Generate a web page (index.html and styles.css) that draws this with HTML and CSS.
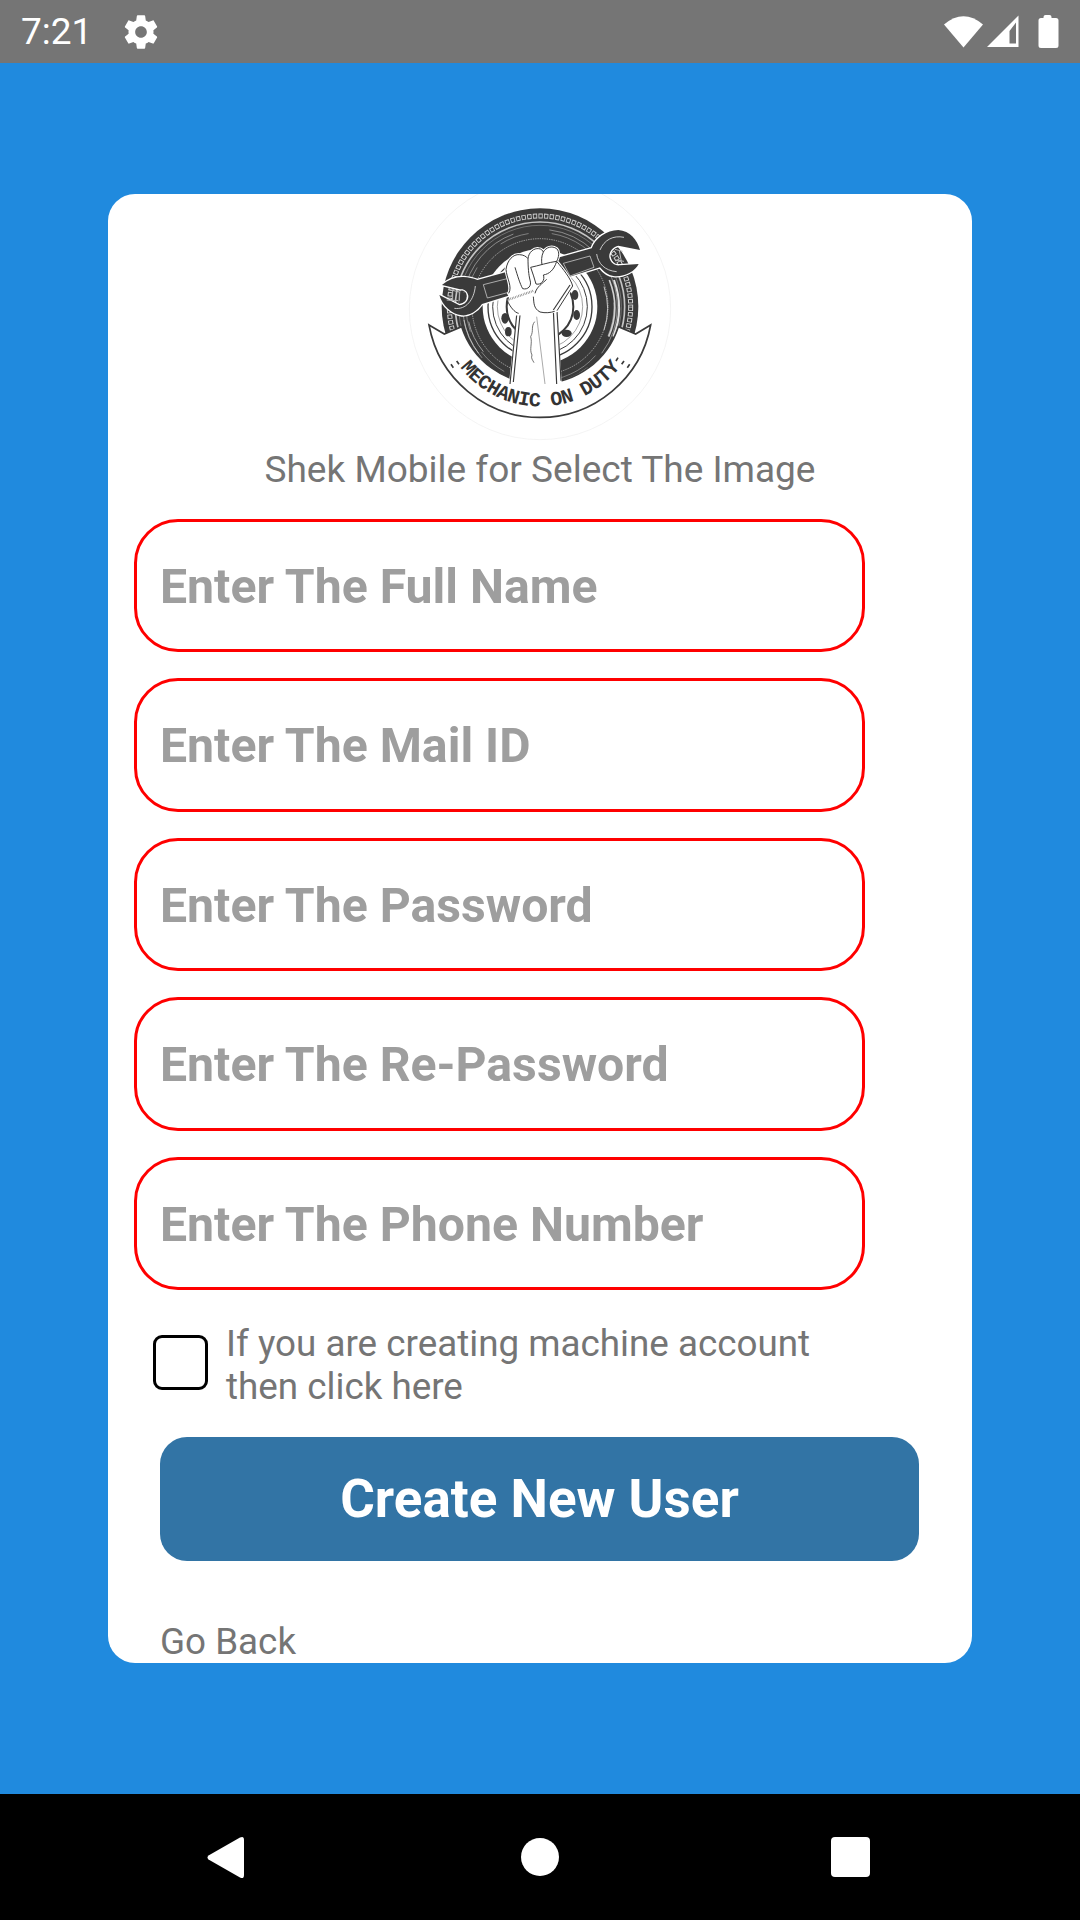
FILE: index.html
```html
<!DOCTYPE html>
<html lang="en">
<head>
<meta charset="utf-8">
<title>Create New User</title>
<link rel="stylesheet" href="styles.css">
</head>
<body>
<div class="screen">
  <header class="status">
    <div class="status-left">
      <span class="time">7:21</span>
      <svg class="gear" viewBox="0 0 24 24"><path d="M19.43 12.98c.04-.32.07-.64.07-.98s-.03-.66-.07-.98l2.11-1.65c.19-.15.24-.42.12-.64l-2-3.46c-.12-.22-.39-.3-.61-.22l-2.49 1c-.52-.4-1.08-.73-1.69-.98l-.38-2.65C14.46 2.18 14.25 2 14 2h-4c-.25 0-.46.18-.49.42l-.38 2.65c-.61.25-1.17.59-1.69.98l-2.49-1c-.23-.09-.49 0-.61.22l-2 3.46c-.13.22-.07.49.12.64l2.11 1.65c-.04.32-.07.65-.07.98s.03.66.07.98l-2.11 1.65c-.19.15-.24.42-.12.64l2 3.46c.12.22.39.3.61.22l2.49-1c.52.4 1.08.73 1.69.98l.38 2.65c.03.24.24.42.49.42h4c.25 0 .46-.18.49-.42l.38-2.65c.61-.25 1.17-.59 1.69-.98l2.49 1c.23.09.49 0 .61-.22l2-3.46c.12-.22.07-.49-.12-.64l-2.11-1.65zM12 15.5c-1.93 0-3.5-1.57-3.5-3.5s1.57-3.5 3.5-3.5 3.5 1.57 3.5 3.5-1.57 3.5-3.5 3.5z"/></svg>
    </div>
    <svg class="status-icons" width="116" height="36" viewBox="0 0 116 36">
      <path d="M0 10.5 Q19.5 -6 39 10.5 L19.5 33.5 Z"/>
      <path fill-rule="evenodd" d="M43 33 L74.5 1.5 V33 Z M65.5 29.5 H72 V8.5 L65.5 17 Z"/>
      <path d="M99.5 3 Q99.5 1 101.5 1 H105.5 Q107.5 1 107.5 3 V4 H112 Q114.500 4 114.500 6.500 V31.500 Q114.500 34 112 34 H97 Q94.500 34 94.500 31.500 V6.500 Q94.500 4 97 4 H99.500 Z"/>
    </svg>
  </header>

  <main class="main">
    <section class="card">
      <svg class="logo" viewBox="0 0 840 810">
        <circle cx="420" cy="387" r="392" fill="#fff" stroke="#eeeeee" stroke-width="2"/>
        <!-- tyre -->
        <circle cx="420" cy="380" r="295" fill="#3a3a3a"/>
        <circle cx="420" cy="380" r="272" fill="none" stroke="#d2d2d2" stroke-width="15" stroke-dasharray="13 4"/>
        <circle cx="420" cy="380" r="272" fill="none" stroke="#3a3a3a" stroke-width="9" stroke-dasharray="8 9" stroke-dashoffset="-2.500"/>
        <circle cx="420" cy="380" r="254" fill="none" stroke="#c4c4c4" stroke-width="5"/>
        <circle cx="420" cy="380" r="244" fill="none" stroke="#8e8e8e" stroke-width="2"/>
        <circle cx="420" cy="380" r="232" fill="none" stroke="#b5b5b5" stroke-width="2" stroke-dasharray="150 60 240 110"/>
        <circle cx="420" cy="380" r="222" fill="none" stroke="#a5a5a5" stroke-width="2" stroke-dasharray="90 70 200 100"/>
        <path d="M642 300 A236 236 0 0 1 640 470" fill="none" stroke="#e0e0e0" stroke-width="6"/>
        <path d="M628 300 A222 222 0 0 1 626 470" fill="none" stroke="#d0d0d0" stroke-width="5"/>
        <path d="M612 320 A204 204 0 0 1 612 450" fill="none" stroke="#c0c0c0" stroke-width="3"/>
        <path d="M192 420 A232 232 0 0 0 236 520" fill="none" stroke="#bdbdbd" stroke-width="3"/>
        <path d="M206 425 A218 218 0 0 0 250 515" fill="none" stroke="#9d9d9d" stroke-width="3"/>
        <circle cx="420" cy="380" r="204" fill="none" stroke="#d8d8d8" stroke-width="2" stroke-dasharray="4 3"/>
        <!-- wheel -->
        <circle cx="420" cy="380" r="172" fill="#fff"/>
        <circle cx="420" cy="380" r="156" fill="none" stroke="#3a3a3a" stroke-width="4"/>
        <circle cx="420" cy="380" r="142" fill="none" stroke="#3a3a3a" stroke-width="3"/>
        <circle cx="420" cy="380" r="128" fill="none" stroke="#777" stroke-width="2"/>
        <circle cx="420" cy="380" r="100" fill="none" stroke="#3a3a3a" stroke-width="6"/>
        <ellipse cx="315" cy="415" rx="11" ry="16" fill="#3a3a3a"/>
        <ellipse cx="325" cy="455" rx="10" ry="14" fill="#3a3a3a"/>
        <ellipse cx="525" cy="345" rx="10" ry="15" fill="#3a3a3a"/>
        <ellipse cx="530" cy="405" rx="10" ry="15" fill="#3a3a3a"/>
        <ellipse cx="500" cy="460" rx="15" ry="11" fill="#3a3a3a"/>
        <!-- banner -->
        <path d="M87 435 L133 462 L185 440 A247 247 0 0 0 655 440 L707 462 L752 435 A338 338 0 0 1 87 435 Z" fill="#fff" stroke="#3a3a3a" stroke-width="5"/>
        <path d="M153 553 l7 10 M170 543 l7 10 M654 533 l-6 10 M672 543 l-7 10 M689 553 l-7 10" fill="none" stroke="#3a3a3a" stroke-width="5"/>
        <!-- wrench -->
        <path d="M232 300 L575 205 C585 175 620 150 655 150 C690 152 712 180 720 210 L655 197 C640 200 626 215 628 232 C632 250 645 258 660 256 L716 252 C705 275 670 292 640 288 C625 286 610 275 600 262 L246 372 C230 395 205 408 185 406 C155 402 128 378 118 345 L178 376 C195 374 206 362 205 347 C202 333 192 326 180 328 L126 315 C145 298 170 290 190 291 C205 292 220 295 232 300 Z" fill="#3a3a3a" stroke="#fff" stroke-width="8" stroke-linejoin="round" paint-order="stroke"/>
        <path d="M250 314 L345 290 L352 330 L262 354 Z M490 250 L570 228 L582 262 L510 288 Z" fill="none" stroke="#e6e6e6" stroke-width="2"/>
        <path d="M226 318 C222 360 198 390 163 385 M590 222 C594 250 614 272 650 275 M600 210 C612 180 640 165 672 172" fill="none" stroke="#e6e6e6" stroke-width="2.500"/>
        <path d="M145 328 L178 336 M140 360 L175 362 M158 330 V362 M178 335 V362" fill="none" stroke="#bbb" stroke-width="3"/>
        <path d="M645 208 L668 214 M648 240 L672 244 M658 212 L664 244" fill="none" stroke="#bbb" stroke-width="3"/>
        <!-- arm -->
        <path d="M350 395 L326 618 L486 618 L472 395 Z" fill="#fff"/>
        <path d="M350 405 L330 612 M360 405 L340 606 M471 392 L483 602 M460 390 L470 612" fill="none" stroke="#3a3a3a" stroke-width="3.500"/>
        <path d="M410 410 L435 612" fill="none" stroke="#555" stroke-width="1.500"/>
        <path d="M404 425 C392 440 402 452 392 470 C398 490 387 508 396 525 C392 535 398 540 402 548" fill="none" stroke="#555" stroke-width="2.500"/>
        <!-- fist -->
        <path d="M318 268 C322 240 340 222 358 224 C370 224 380 230 384 236 C386 216 402 204 416 206 C424 206 428 212 430 216 C438 202 456 196 470 206 C480 216 476 232 470 244 C490 268 512 295 518 318 L471 392 C440 402 380 402 350 402 C346 380 336 360 326 340 C338 320 320 295 318 268 Z" fill="#fff" stroke="#fff" stroke-width="9"/>
        <path d="M326 340 C338 320 320 295 318 268 C322 240 340 222 358 224 C370 224 380 230 384 236 C386 216 402 204 416 206 C424 206 428 212 430 216 C438 202 456 196 470 206 C480 216 476 232 470 244 C490 268 512 295 518 318 L471 392" fill="none" stroke="#3a3a3a" stroke-width="3"/>
        <path d="M510 315 L460 390" fill="none" stroke="#3a3a3a" stroke-width="3.500"/>
        <path d="M345 262 C352 285 360 312 368 326 C384 330 396 318 390 300 C386 285 384 262 384 236 M392 262 C398 280 404 296 408 312 C424 316 436 300 430 285 M430 216 C424 228 424 244 426 254 M392 262 C412 258 450 246 470 244 M430 285 C448 282 462 270 470 244 M405 340 C410 320 428 310 440 298 M400 350 C402 368 400 385 420 396 C436 400 452 398 464 394 M322 362 C330 380 344 398 356 400" fill="none" stroke="#3a3a3a" stroke-width="3"/>
        <path d="M322 360 L402 332" fill="none" stroke="#777" stroke-width="7" stroke-dasharray="2 3"/>
        <!-- banner lettering -->
        <path id="bannerCurve" d="M178 558 A302 302 0 0 0 662 558" fill="none"/>
        <text class="logo-text"><textPath href="#bannerCurve" startOffset="50%">MECHANIC ON DUTY</textPath></text>
      </svg>
      <p class="hint">Shek Mobile for Select The Image</p>

      <div class="fields">
        <div class="field">Enter The Full Name</div>
        <div class="field">Enter The Mail ID</div>
        <div class="field">Enter The Password</div>
        <div class="field">Enter The Re-Password</div>
        <div class="field">Enter The Phone Number</div>
      </div>

      <div class="check-row">
        <span class="checkbox"></span>
        <span class="check-label">If you are creating machine account then click here</span>
      </div>

      <div class="submit">Create New User</div>
      <div class="back">Go Back</div>
    </section>
  </main>

  <nav class="nav">
    <svg class="nav-back" width="38" height="43" viewBox="0 0 38 43"><path d="M1.500 19.500 L33 1.500 Q37 -0.500 37 4 V39 Q37 43.500 33 41.500 L1.500 23.500 Q-0.500 21.500 1.500 19.500 Z"/></svg>
    <span class="nav-home"></span>
    <span class="nav-recent"></span>
  </nav>
</div>
</body>
</html>
```
FILE: styles.css
```css
* { box-sizing: border-box; }
html, body { margin: 0; padding: 0; }
body { font-family: Roboto, "Noto Sans", sans-serif; }

.screen {
  width: 1080px;
  height: 1920px;
  display: flex;
  flex-direction: column;
  background: #208ade;
  overflow: hidden;
}

/* status bar */
.status {
  height: 63px;
  flex: none;
  background: #757575;
  display: flex;
  align-items: center;
  justify-content: space-between;
  padding: 0 20px 0 21px;
  color: #fff;
}
.status-left { display: flex; align-items: center; gap: 29px; }
.time { font-size: 37px; line-height: 41px; }
.gear { width: 40px; height: 40px; fill: #fff; display: block; }
.status-icons { fill: #fff; display: block; }

/* main */
.main {
  flex: 1;
  display: flex;
  align-items: center;
  justify-content: center;
}
.card {
  width: 864px;
  height: 1469px;
  background: #fff;
  border-radius: 27px;
  overflow: hidden;
  display: flex;
  flex-direction: column;
}
.logo {
  width: 280px;
  height: 270px;
  flex: none;
  display: block;
  margin: -14px auto 0;
}
.logo-text {
  font-family: "Liberation Mono", monospace;
  font-weight: 700;
  font-size: 60px;
  letter-spacing: -1.500px;
  fill: #333;
  text-anchor: middle;
}
.hint {
  margin: -1px 0 0;
  text-align: center;
  font-size: 37px;
  line-height: 42px;
  color: #757575;
}

/* fields */
.fields {
  margin: 27.750px 0 0 26px;
  width: 731px;
  display: flex;
  flex-direction: column;
  gap: 26px;
}
.field {
  height: 133.500px;
  border: 3px solid #ff0000;
  border-radius: 44px;
  padding: 1px 0 0 23px;
  display: flex;
  align-items: center;
  font-size: 48.200px;
  font-weight: 700;
  color: #9e9e9e;
}

/* checkbox */
.check-row {
  margin: 31.250px 0 0 45px;
  width: 700px;
  display: flex;
  align-items: flex-start;
  gap: 18px;
}
.checkbox {
  flex: none;
  width: 55px;
  height: 55px;
  margin-top: 13px;
  border: 3px solid #000;
  border-radius: 9px;
}
.check-label {
  font-size: 36.800px;
  line-height: 43px;
  color: #757575;
}

/* actions */
.submit {
  margin: 29px 0 0 52px;
  width: 759px;
  height: 124px;
  flex: none;
  padding-top: 1px;
  border-radius: 27px;
  background: #3274a5;
  color: #fff;
  font-size: 53px;
  font-weight: 700;
  display: flex;
  align-items: center;
  justify-content: center;
}
.back {
  margin: 60px 0 0 52px;
  font-size: 36.800px;
  line-height: 42px;
  color: #757575;
}

/* nav bar */
.nav {
  height: 126px;
  flex: none;
  background: #000;
  display: flex;
  align-items: center;
  padding-left: 207px;
}
.nav-back { fill: #fff; display: block; }
.nav-home {
  width: 38px;
  height: 38px;
  margin-left: 276px;
  border-radius: 50%;
  background: #fff;
}
.nav-recent {
  width: 39px;
  height: 40px;
  margin-left: 272px;
  border-radius: 4px;
  background: #fff;
}
```
